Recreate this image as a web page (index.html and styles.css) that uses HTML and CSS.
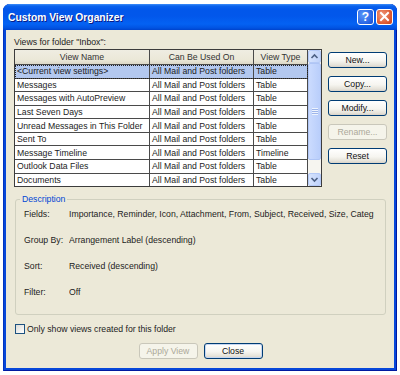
FILE: index.html
```html
<!DOCTYPE html>
<html>
<head>
<meta charset="utf-8">
<title>Custom View Organizer</title>
<link rel="stylesheet" href="styles.css">
</head>
<body>
<div class="window">
  <div class="titlebar">
    <span class="title">Custom View Organizer</span>
    <div class="caption-btns">
      <span class="cbtn help">?</span>
      <span class="cbtn close"><svg width="11" height="11" viewBox="0 0 11 11"><path d="M2 2 L9 9 M9 2 L2 9" stroke="#fff" stroke-width="2" stroke-linecap="square"/></svg></span>
    </div>
  </div>
  <div class="client">
    <div class="label">Views for folder "Inbox":</div>
    <div class="main">
      <div class="list">
        <div class="grid">
          <div class="row head"><div class="cell">View Name</div><div class="cell">Can Be Used On</div><div class="cell">View Type</div></div>
          <div class="row sel"><div class="cell">&lt;Current view settings&gt;</div><div class="cell">All Mail and Post folders</div><div class="cell">Table</div></div>
          <div class="row"><div class="cell">Messages</div><div class="cell">All Mail and Post folders</div><div class="cell">Table</div></div>
          <div class="row"><div class="cell">Messages with AutoPreview</div><div class="cell">All Mail and Post folders</div><div class="cell">Table</div></div>
          <div class="row"><div class="cell">Last Seven Days</div><div class="cell">All Mail and Post folders</div><div class="cell">Table</div></div>
          <div class="row"><div class="cell">Unread Messages in This Folder</div><div class="cell">All Mail and Post folders</div><div class="cell">Table</div></div>
          <div class="row"><div class="cell">Sent To</div><div class="cell">All Mail and Post folders</div><div class="cell">Table</div></div>
          <div class="row"><div class="cell">Message Timeline</div><div class="cell">All Mail and Post folders</div><div class="cell">Timeline</div></div>
          <div class="row"><div class="cell">Outlook Data Files</div><div class="cell">All Mail and Post folders</div><div class="cell">Table</div></div>
          <div class="row"><div class="cell">Documents</div><div class="cell">All Mail and Post folders</div><div class="cell">Table</div></div>
        </div>
        <div class="scrollbar">
          <div class="sb-btn"><svg width="9" height="9" viewBox="0 0 9 9"><path d="M1.5 6 L4.5 3 L7.5 6" fill="none" stroke="#4D6185" stroke-width="1.6"/></svg></div>
          <div class="sb-thumb"><span class="grip"></span></div>
          <div class="sb-track"></div>
          <div class="sb-btn"><svg width="9" height="9" viewBox="0 0 9 9"><path d="M1.5 3 L4.5 6 L7.5 3" fill="none" stroke="#4D6185" stroke-width="1.6"/></svg></div>
        </div>
      </div>
      <div class="side">
        <button class="btn">New...</button>
        <button class="btn">Copy...</button>
        <button class="btn">Modify...</button>
        <button class="btn" disabled>Rename...</button>
        <button class="btn">Reset</button>
      </div>
    </div>
    <fieldset class="desc">
      <legend>Description</legend>
      <div class="desc-grid">
        <span>Fields:</span><span class="val">Importance, Reminder, Icon, Attachment, From, Subject, Received, Size, Categ</span>
        <span>Group By:</span><span class="val">Arrangement Label (descending)</span>
        <span>Sort:</span><span class="val">Received (descending)</span>
        <span>Filter:</span><span class="val">Off</span>
      </div>
    </fieldset>
    <label class="check"><span class="box"></span>Only show views created for this folder</label>
    <div class="bottom">
      <button class="btn" disabled>Apply View</button>
      <button class="btn default">Close</button>
    </div>
  </div>
</div>
</body>
</html>
```
FILE: styles.css
```css
* { box-sizing: border-box; }
html, body { margin: 0; padding: 0; }
body {
  width: 400px;
  height: 375px;
  overflow: hidden;
  background: #fff;
  font-family: "Liberation Sans", Arial, sans-serif;
  font-size: 8.7px;
  color: #1c1c1c;
}
.window {
  margin: 4px 0 0 3px;
  width: 394px;
  height: 367px;
  background: #0747D9;
  border-radius: 7px 7px 0 0;
  display: flex;
  flex-direction: column;
  box-shadow: inset -1px 0 #0019A0, inset 1px 0 #0033C0, inset 0 -1px #0019A0;
}
.titlebar {
  height: 26px;
  flex: none;
  border-radius: 7px 7px 0 0;
  background: linear-gradient(#3D8DF9 0, #0A62EC 2px, #0257EA 5px, #0257EB 12px, #0462F3 20px, #0153E2 24px, #0043CC 26px);
  display: flex;
  align-items: center;
  padding: 0 4px 0 5px;
}
.title {
  flex: 1;
  color: #fff;
  font-weight: bold;
  font-size: 10.3px;
  text-shadow: 1px 1px 0 #0A1C86;
}
.caption-btns { display: flex; gap: 2px; margin-top: -1px; }
.cbtn {
  width: 17px;
  height: 16px;
  border: 1px solid #fff;
  border-radius: 3px;
  display: flex;
  align-items: center;
  justify-content: center;
  color: #fff;
  font-weight: bold;
  font-size: 12px;
}
.help { background: radial-gradient(circle at 35% 35%, #5A97FA, #2763E3 70%, #1A4ECC); }
.close { background: radial-gradient(circle at 35% 35%, #F09A7C, #DD5A33 65%, #C4411B); }

.client {
  flex: 1;
  margin: 0 3px 3px;
  background: #ECE9D8;
  padding: 6px 7px 0 8px;
  display: flex;
  flex-direction: column;
}
.label { line-height: 12px; }
.main { display: flex; margin-top: 1px; }
.list {
  width: 308px;
  height: 138px;
  border: 1px solid #3c3c3c;
  display: flex;
  background: #fff;
}
.grid { flex: 1; display: flex; flex-direction: column; }
.row {
  flex: 1;
  display: grid;
  grid-template-columns: 135px 104px 54px;
  border-bottom: 1px solid #4a4a4a;
}
.row:last-child { border-bottom: none; }
.cell {
  border-right: 1px solid #4a4a4a;
  padding-left: 2px;
  display: flex;
  align-items: center;
  white-space: nowrap;
  overflow: hidden;
}
.head { flex: none; height: 15px; background: linear-gradient(#EFEDE2, #EBE8D8 70%, #DCD8C8); color: #333; }
.head .cell { justify-content: center; padding-left: 0; }
.sel { background: #B3C8EF; outline: 1px dotted #222; outline-offset: -1px; }

.scrollbar {
  width: 13px;
  flex: none;
  display: flex;
  flex-direction: column;
  background: #F6F5F0;
}
.sb-btn {
  height: 13px;
  flex: none;
  border: 1px solid #B4C9F6;
  border-radius: 2px;
  background: linear-gradient(to right, #D6E3FD, #C0D3FB);
  display: flex;
  align-items: center;
  justify-content: center;
}
.sb-thumb {
  height: 97px;
  flex: none;
  border: 1px solid #AFC5F5;
  border-radius: 2px;
  background: linear-gradient(to right, #CBDBFE, #B9CEFB);
  display: flex;
  align-items: center;
  justify-content: center;
}
.grip {
  width: 6px;
  height: 7px;
  background: repeating-linear-gradient(#EEF4FE 0 1px, #9DB5EA 1px 2px);
}
.sb-track { flex: 1; }

.side {
  display: flex;
  flex-direction: column;
  gap: 8px;
  margin: 3px 0 0 6px;
}
.btn {
  width: 59px;
  height: 16px;
  padding: 0;
  border: 1px solid #003C74;
  border-radius: 3px;
  background: linear-gradient(#FFFFFF, #F6F5F0 55%, #E6E3DA 85%, #D8D3C8);
  font: inherit;
  color: #111;
  display: flex;
  align-items: center;
  justify-content: center;
}
.btn:disabled {
  border-color: #C9C7BA;
  background: #F5F4EA;
  color: #ACA899;
}
.btn.default { box-shadow: inset 0 0 0 1px #C6D6F0; }

.desc {
  margin: 6px 0 0 1px;
  width: 371px;
  height: 122px;
  padding: 0;
  border: 1px solid #D0D0BF;
  border-radius: 3px;
  min-width: 0;
}
.desc legend {
  margin-left: 4px;
  padding: 0 2px;
  line-height: 12px;
  color: #0046D5;
}
.desc-grid {
  display: grid;
  grid-template-columns: 45px 312px;
  row-gap: 14px;
  line-height: 12px;
  margin: 3px 0 0 8px;
}
.val { white-space: nowrap; overflow: hidden; }

.check {
  margin-top: 8px;
  height: 12px;
  display: flex;
  align-items: center;
  gap: 2px;
  padding-left: 1px;
}
.box {
  width: 10px;
  height: 10px;
  border: 1px solid #1C5180;
  background: linear-gradient(135deg, #DCDCD7, #FFFFFF);
}
.bottom {
  margin-top: 8px;
  display: flex;
  justify-content: center;
  gap: 6px;
}
```
